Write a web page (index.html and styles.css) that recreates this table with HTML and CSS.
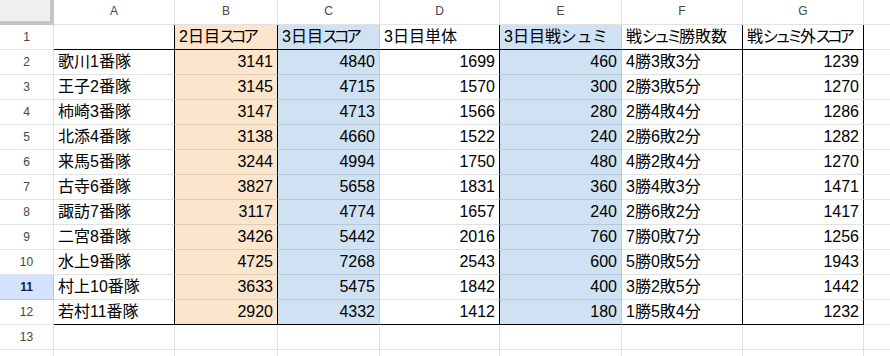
FILE: index.html
```html
<!DOCTYPE html>
<html lang="ja">
<head>
<meta charset="utf-8">
<title>Sheet</title>
<link rel="stylesheet" href="styles.css">
</head>
<body>
<div class="sheet">
  <div class="corner"></div>
  <div class="ch">A</div><div class="ch">B</div><div class="ch">C</div><div class="ch">D</div><div class="ch">E</div><div class="ch">F</div><div class="ch">G</div><div class="ch last"></div>

  <div class="rh">1</div>
  <div class="c t bb br"></div><div class="c t pe bb br">2日目<span class="kana">スコア</span></div><div class="c t bl bb">3日目<span class="kana">スコア</span></div><div class="c t bb br">3日目単体</div><div class="c t bl bb">3日目戦<span class="kana-wide">シュミ</span></div><div class="c t bb br">戦<span class="kana-s">シュミ</span>勝敗数</div><div class="c t bb br">戦<span class="kana-s">シュミ</span>外<span class="kana">スコア</span></div><div class="c last"></div>

  <div class="rh">2</div>
  <div class="c t br">歌川1番隊</div><div class="c n pe br">3141</div><div class="c n bl">4840</div><div class="c n br">1699</div><div class="c n bl">460</div><div class="c t br">4勝3敗3分</div><div class="c n br">1239</div><div class="c last"></div>

  <div class="rh">3</div>
  <div class="c t br">王子2番隊</div><div class="c n pe br">3145</div><div class="c n bl">4715</div><div class="c n br">1570</div><div class="c n bl">300</div><div class="c t br">2勝3敗5分</div><div class="c n br">1270</div><div class="c last"></div>

  <div class="rh">4</div>
  <div class="c t br">柿崎3番隊</div><div class="c n pe br">3147</div><div class="c n bl">4713</div><div class="c n br">1566</div><div class="c n bl">280</div><div class="c t br">2勝4敗4分</div><div class="c n br">1286</div><div class="c last"></div>

  <div class="rh">5</div>
  <div class="c t br">北添4番隊</div><div class="c n pe br">3138</div><div class="c n bl">4660</div><div class="c n br">1522</div><div class="c n bl">240</div><div class="c t br">2勝6敗2分</div><div class="c n br">1282</div><div class="c last"></div>

  <div class="rh">6</div>
  <div class="c t br">来馬5番隊</div><div class="c n pe br">3244</div><div class="c n bl">4994</div><div class="c n br">1750</div><div class="c n bl">480</div><div class="c t br">4勝2敗4分</div><div class="c n br">1270</div><div class="c last"></div>

  <div class="rh">7</div>
  <div class="c t br">古寺6番隊</div><div class="c n pe br">3827</div><div class="c n bl">5658</div><div class="c n br">1831</div><div class="c n bl">360</div><div class="c t br">3勝4敗3分</div><div class="c n br">1471</div><div class="c last"></div>

  <div class="rh">8</div>
  <div class="c t br">諏訪7番隊</div><div class="c n pe br">3117</div><div class="c n bl">4774</div><div class="c n br">1657</div><div class="c n bl">240</div><div class="c t br">2勝6敗2分</div><div class="c n br">1417</div><div class="c last"></div>

  <div class="rh">9</div>
  <div class="c t br">二宮8番隊</div><div class="c n pe br">3426</div><div class="c n bl">5442</div><div class="c n br">2016</div><div class="c n bl">760</div><div class="c t br">7勝0敗7分</div><div class="c n br">1256</div><div class="c last"></div>

  <div class="rh">10</div>
  <div class="c t br">水上9番隊</div><div class="c n pe br">4725</div><div class="c n bl">7268</div><div class="c n br">2543</div><div class="c n bl">600</div><div class="c t br">5勝0敗5分</div><div class="c n br">1943</div><div class="c last"></div>

  <div class="rh sel">11</div>
  <div class="c t br">村上10番隊</div><div class="c n pe br">3633</div><div class="c n bl">5475</div><div class="c n br">1842</div><div class="c n bl">400</div><div class="c t br">3勝2敗5分</div><div class="c n br">1442</div><div class="c last"></div>

  <div class="rh">12</div>
  <div class="c t br bb">若村11番隊</div><div class="c n pe br bb">2920</div><div class="c n bl bb">4332</div><div class="c n br bb">1412</div><div class="c n bl bb">180</div><div class="c t br bb">1勝5敗4分</div><div class="c n br bb">1232</div><div class="c last"></div>

  <div class="rh">13</div>
  <div class="c"></div><div class="c"></div><div class="c"></div><div class="c"></div><div class="c"></div><div class="c"></div><div class="c"></div><div class="c last"></div>

  <div class="rh"></div>
  <div class="c"></div><div class="c"></div><div class="c"></div><div class="c"></div><div class="c"></div><div class="c"></div><div class="c"></div><div class="c last"></div>
</div>
</body>
</html>
```

FILE: styles.css
```css
html, body {
  margin: 0;
  padding: 0;
  background: #ffffff;
  overflow: hidden;
}

.sheet {
  display: grid;
  grid-template-columns: 54px 121px 103px 102px 120px 122px 121px 121px 1fr;
  grid-template-rows: repeat(15, 25px);
  width: 890px;
  height: 356px;
  overflow: hidden;
  font-family: "Liberation Sans", Arial, "Noto Sans CJK JP", sans-serif;
}

.sheet > div {
  box-sizing: border-box;
  border-right: 1px solid rgba(0, 0, 0, 0.115);
  border-bottom: 1px solid rgba(0, 0, 0, 0.115);
  white-space: nowrap;
  overflow: hidden;
}

.corner {
  background: #f0f0f0;
  border-right: 4px solid #c4c4c4 !important;
  border-bottom: 4px solid #c4c4c4 !important;
}

.ch {
  font-size: 12px;
  line-height: 22px;
  text-align: center;
  color: #444746;
  background: #ffffff;
}

.rh {
  font-size: 12px;
  line-height: 24px;
  text-align: center;
  color: #444746;
  background: #ffffff;
}

.rh.sel {
  background: #d3e3fd;
  color: #0b1f44;
  font-weight: bold;
}

.c {
  font-size: 16px;
  line-height: 24px;
  color: #000000;
  padding: 0 4px;
  font-feature-settings: "palt";
}

.kana { letter-spacing: -3px; }
.kana-s { letter-spacing: -1.5px; }
.kana-wide { letter-spacing: 2px; }

.t { text-align: left; }
.n { text-align: right; }

.pe { background: #fce5cd; }
.bl { background: #cfe2f3; }

.sheet > .bb { border-bottom: 1px solid #000000; }
.sheet > .br { border-right: 1px solid #000000; }

.sheet > .last { border-right: none; }
```
